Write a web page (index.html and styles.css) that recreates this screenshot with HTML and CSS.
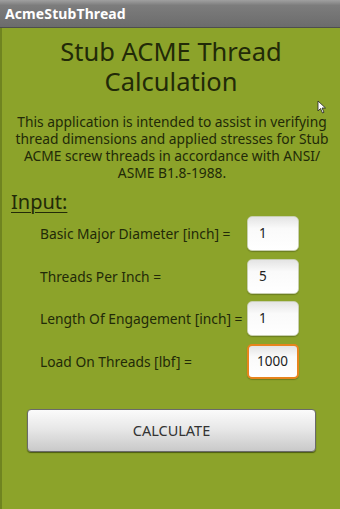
FILE: index.html
```html
<!DOCTYPE html>
<html>
<head>
<meta charset="utf-8">
<link rel="stylesheet" href="styles.css">
</head>
<body>
<div class="titlebar">AcmeStubThread</div>
<main class="content">
  <h1 class="heading"><span class="hline">Stub ACME Thread</span><span class="hline">Calculation</span></h1>
  <p class="desc">This application is intended to assist in verifying thread dimensions and applied stresses for Stub ACME screw threads in accordance with ANSI/ ASME B1.8-1988.</p>
  <h2 class="section">Input:</h2>
  <div class="rows">
    <div class="row"><span class="label">Basic Major Diameter [inch] =</span><span class="field">1</span></div>
    <div class="row"><span class="label">Threads Per Inch =</span><span class="field">5</span></div>
    <div class="row"><span class="label">Length Of Engagement [inch] =</span><span class="field">1</span></div>
    <div class="row"><span class="label">Load On Threads [lbf] =</span><span class="field focus">1000</span></div>
  </div>
  <div class="btnwrap"><button class="btn">CALCULATE</button></div>
</main>
<svg class="cursor" width="10" height="14" viewBox="0 0 10 14"><path d="M1 1 L1 11 L3.5 8.5 L5.5 13 L7 12.3 L5 8 L8.5 8 Z" fill="#fff" stroke="#222" stroke-width="0.8"/></svg>
</body>
</html>
```
FILE: styles.css
```css
html, body {
  margin: 0;
  padding: 0;
}
body {
  width: 340px;
  height: 509px;
  overflow: hidden;
  background: #8ca32a;
  font-family: "Noto Sans", "Open Sans", sans-serif;
  position: relative;
}
.titlebar {
  height: 28px;
  box-sizing: border-box;
  background: linear-gradient(#a0a0a0 0%, #7c7c7c 20%, #6c6c6c 100%);
  border-bottom: 1px solid #4e4e4e;
  color: #fff;
  font-weight: bold;
  font-size: 14px;
  line-height: 27px;
  padding-left: 5px;
  letter-spacing: 0.1px;
}
.content {
  border-left: 2px solid #6f8420;
  height: 481px;
  box-sizing: border-box;
  display: flex;
  flex-direction: column;
}
.heading {
  margin: 8px 0 0;
  font-weight: normal;
  font-size: 25.5px;
  line-height: 30px;
  text-align: center;
  color: #222a08;
  display: flex;
  flex-direction: column;
  align-items: center;
}
.hline {
  display: block;
  height: 30px;
}
.desc {
  margin: 17px 0 0;
  padding: 0 10px 0 12px;
  font-size: 13.8px;
  line-height: 17px;
  text-align: center;
  color: #222a08;
}
.section {
  margin: 9px 0 0 9px;
  font-weight: normal;
  font-size: 20px;
  line-height: 24px;
  color: #222a08;
  text-decoration: underline;
  text-decoration-thickness: 1px;
  text-underline-offset: 3px;
}
.rows {
  display: flex;
  flex-direction: column;
  gap: 7.5px;
  margin-top: 2px;
  padding-left: 38px;
}
.row {
  display: flex;
  align-items: center;
  height: 35px;
}
.label {
  width: 207px;
  font-size: 13.8px;
  color: #222a08;
  white-space: nowrap;
}
.field {
  width: 52px;
  height: 35px;
  box-sizing: border-box;
  border-radius: 5px;
  background: linear-gradient(#e4e4e4 0%, #fafafa 35%, #ffffff 100%);
  border: 1px solid #c8cfb0;
  box-shadow: 0 1px 1px rgba(60,70,20,0.4);
  font-size: 13.5px;
  line-height: 33px;
  padding-left: 11px;
  color: #222;
}
.field.focus {
  border: 2px solid #e7841d;
  line-height: 31px;
  padding-left: 8px;
}
.btnwrap {
  margin-top: 30px;
  padding: 0 24px 0 25px;
}
.btn {
  width: 100%;
  height: 43px;
  border: 1px solid #6a6a6a;
  border-radius: 4px;
  background: linear-gradient(#fbfbfb 0%, #e8e8e8 45%, #c9c9c9 100%);
  box-shadow: 0 1px 1px rgba(30,40,0,0.6);
  font-family: "Noto Sans", "Open Sans", sans-serif;
  font-size: 14.5px;
  color: #333;
  padding: 0;
}
.cursor {
  position: absolute;
  left: 317px;
  top: 100px;
}
```
